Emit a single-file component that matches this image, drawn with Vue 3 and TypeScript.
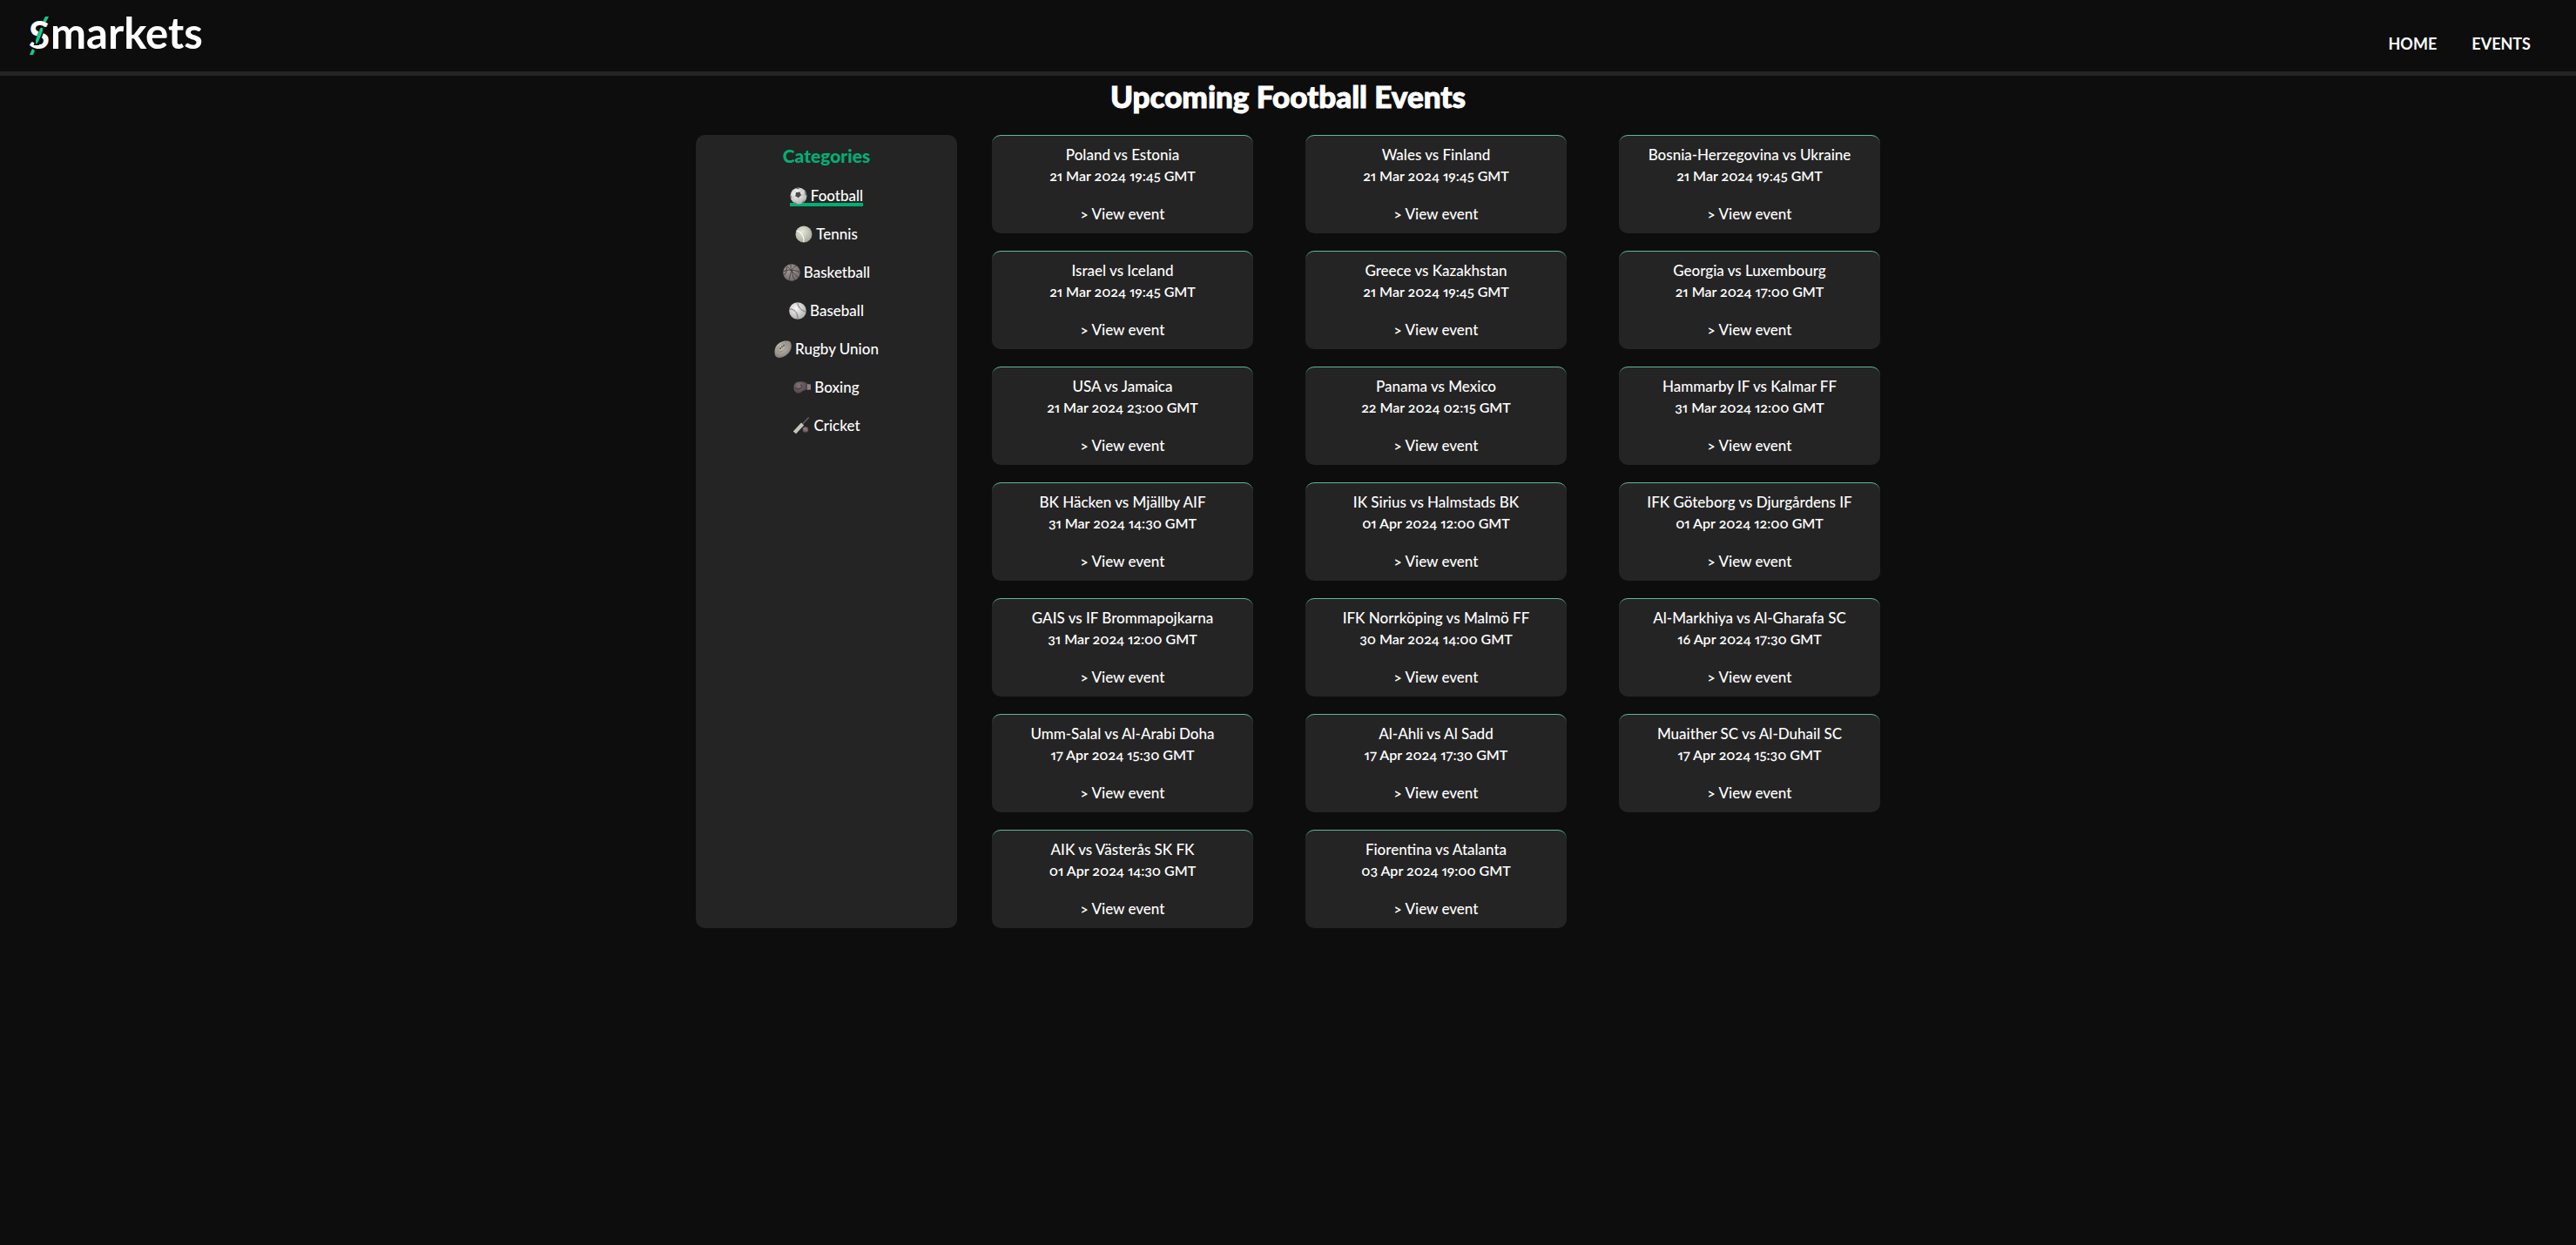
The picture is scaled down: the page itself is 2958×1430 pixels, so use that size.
<script setup lang="ts">
interface Category {
  name: string
  icon: string
  light: string
  dark: string
  active?: boolean
}

interface MatchEvent {
  name: string
  start: string
}

const categories: Category[] = [
  { name: 'Football', icon: 'football', light: '#ffffff', dark: '#a8a8a8', active: true },
  { name: 'Tennis', icon: 'tennis', light: '#e6e8da', dark: '#9da092' },
  { name: 'Basketball', icon: 'basketball', light: '#a89f9b', dark: '#6a6260' },
  { name: 'Baseball', icon: 'baseball', light: '#fafafa', dark: '#a6a6a6' },
  { name: 'Rugby Union', icon: 'rugby', light: '#cbc7bd', dark: '#7b776f' },
  { name: 'Boxing', icon: 'boxing', light: '#857476', dark: '#463c3e' },
  { name: 'Cricket', icon: 'cricket', light: '#8d7b7b', dark: '#574848' },
]

const events: MatchEvent[] = [
  { name: 'Poland vs Estonia', start: '21 Mar 2024 19:45 GMT' },
  { name: 'Wales vs Finland', start: '21 Mar 2024 19:45 GMT' },
  { name: 'Bosnia-Herzegovina vs Ukraine', start: '21 Mar 2024 19:45 GMT' },
  { name: 'Israel vs Iceland', start: '21 Mar 2024 19:45 GMT' },
  { name: 'Greece vs Kazakhstan', start: '21 Mar 2024 19:45 GMT' },
  { name: 'Georgia vs Luxembourg', start: '21 Mar 2024 17:00 GMT' },
  { name: 'USA vs Jamaica', start: '21 Mar 2024 23:00 GMT' },
  { name: 'Panama vs Mexico', start: '22 Mar 2024 02:15 GMT' },
  { name: 'Hammarby IF vs Kalmar FF', start: '31 Mar 2024 12:00 GMT' },
  { name: 'BK Häcken vs Mjällby AIF', start: '31 Mar 2024 14:30 GMT' },
  { name: 'IK Sirius vs Halmstads BK', start: '01 Apr 2024 12:00 GMT' },
  { name: 'IFK Göteborg vs Djurgårdens IF', start: '01 Apr 2024 12:00 GMT' },
  { name: 'GAIS vs IF Brommapojkarna', start: '31 Mar 2024 12:00 GMT' },
  { name: 'IFK Norrköping vs Malmö FF', start: '30 Mar 2024 14:00 GMT' },
  { name: 'Al-Markhiya vs Al-Gharafa SC', start: '16 Apr 2024 17:30 GMT' },
  { name: 'Umm-Salal vs Al-Arabi Doha', start: '17 Apr 2024 15:30 GMT' },
  { name: 'Al-Ahli vs Al Sadd', start: '17 Apr 2024 17:30 GMT' },
  { name: 'Muaither SC vs Al-Duhail SC', start: '17 Apr 2024 15:30 GMT' },
  { name: 'AIK vs Västerås SK FK', start: '01 Apr 2024 14:30 GMT' },
  { name: 'Fiorentina vs Atalanta', start: '03 Apr 2024 19:00 GMT' },
]
</script>

<template>
  <header class="topbar">
    <a href="#" class="brand" aria-label="Smarkets">
      <svg class="logo" width="220" height="70" viewBox="0 -10 220 70" aria-hidden="true">
        <text class="logo-s" x="3" y="46">S</text>
        <text class="logo-rest" x="28" y="46">markets</text>
        <path class="slash-gap" d="M17 22 L21 22 L14 41 L10 41 Z" />
        <g class="slash">
          <path d="M22 9 H26 L23 15 H19 Z" />
          <path d="M16 23 Q17 21 19 22 V26 L14 38 Q12 41 11 40 V36 Z" />
          <path d="M7 46 L10 48 L8 53 H4 Z" />
        </g>
      </svg>
    </a>
    <nav class="nav">
      <a href="#">HOME</a>
      <a href="#">EVENTS</a>
    </nav>
  </header>

  <main>
    <h1>Upcoming Football Events</h1>
    <div class="content">
      <aside class="sidebar">
        <h2>Categories</h2>
        <ul>
          <li v-for="c in categories" :key="c.name">
            <a href="#" class="category" :class="{ active: c.active }">
              <svg width="20" height="20" viewBox="0 0 20 20" aria-hidden="true">
                <defs>
                  <radialGradient :id="'shade-' + c.icon" cx="0.4" cy="0.35" r="0.75">
                    <stop offset="0" :stop-color="c.light" />
                    <stop offset="1" :stop-color="c.dark" />
                  </radialGradient>
                </defs>
                <g v-if="c.icon === 'football'">
                  <circle cx="10" cy="10" r="9.5" fill="url(#shade-football)" />
                  <path d="M7 6 L11.5 5.500 L13 9.300 L9.800 12.300 L6.200 10.300 Z" fill="#4a4a4a" />
                  <path d="M6.500 1.200 Q9 .2 12 .8 L9.500 2.200 Z M17.300 4.500 Q19.500 7 19.300 10.500 L17.300 8 Z M.6 8 L1.800 11 L1.400 13.500 Q0 11 .6 8 Z M4.800 16.400 L7.500 18.200 L8 19.300 Q5.800 18.600 4.800 16.400 Z M14.200 17 L16.800 14.600 Q16 17 13.200 18.900 Z" fill="#666" />
                  <path d="M7 6 L4.200 4.200 M11.500 5.500 L13.500 3 M13 9.300 L17 9 M9.800 12.300 L10.800 16.800 M6.200 10.300 L2.500 12" stroke="#b4b4b4" stroke-width=".6" fill="none" />
                </g>
                <g v-else-if="c.icon === 'tennis'">
                  <circle cx="10" cy="10" r="9.5" fill="url(#shade-tennis)" />
                  <path d="M1.500 5.800 Q7 7 9 12 Q10.500 15.500 9.800 19" fill="none" stroke="#fbfbf6" stroke-width="1.3" />
                </g>
                <g v-else-if="c.icon === 'basketball'">
                  <circle cx="10" cy="10" r="9.8" fill="url(#shade-basketball)" />
                  <path d="M1 8.500 Q9 5 19 9.500 M9 .5 Q10.500 9 7 19 M4.500 2.500 Q10 8 17.500 16 M15.500 2 Q10 4 10.500 10 Q11 16 14 19 M1 13 Q6 9 3.800 3.500" fill="none" stroke="#373232" stroke-width=".8" />
                </g>
                <g v-else-if="c.icon === 'baseball'">
                  <circle cx="10" cy="10" r="9.8" fill="url(#shade-baseball)" />
                  <path d="M.5 8 C6 7.500 10 12 10 19.500 M9.500 .5 C11 6 14 10 19.500 11" fill="none" stroke="#8b7f7f" stroke-width=".8" />
                  <path d="M.5 8 C6 7.500 10 12 10 19.500 M9.500 .5 C11 6 14 10 19.500 11" fill="none" stroke="#8b7f7f" stroke-width="2" stroke-dasharray=".6 1.4" />
                </g>
                <g v-else-if="c.icon === 'rugby'">
                  <path d="M.6 15 C0 10 2 5 6.500 2.500 C10 .4 14 0 17 .8 Q19 1.200 19.400 3.500 C20.300 7.500 19.500 11 16.500 14.500 C13 18.600 8.500 20.300 4.500 19.800 Q1 19.300 .6 15 Z" fill="url(#shade-rugby)" />
                  <path d="M4 11.500 C4 6.500 8 3 13.500 2.500 C15.500 6 13 11 7.500 13 C5.500 13.400 4.500 12.800 4 11.500 Z" fill="none" stroke="#7a766f" stroke-width=".6" />
                  <path d="M6 10 L12.500 4.500 M6.200 7.800 L8 10 M8 6 L9.800 8.400 M10 4.600 L11.800 7" fill="none" stroke="#47443f" stroke-width=".8" />
                </g>
                <g v-else-if="c.icon === 'boxing'">
                  <path d="M.5 9 Q1 4 6 3.500 Q12 2.300 16 5.500 V12.500 L11 14 Q8 17.500 4 16.500 Q0 14.500 .5 9 Z" fill="url(#shade-boxing)" />
                  <path d="M2 10 Q5 14 9.500 10 Q11 7 8 7" fill="none" stroke="#342d2f" stroke-width=".9" />
                  <path d="M16 6 L20 6.500 V12.500 L16 13 Z" fill="#868286" />
                </g>
                <g v-else>
                  <path d="M11.500 8 L18.700 .5" stroke="#6c6866" stroke-width="1.1" />
                  <path d="M.8 16.500 L10 6.500 L13.200 9.500 L4 19.200 Z" fill="#c9c5ba" />
                  <circle cx="15" cy="14.5" r="3.3" fill="url(#shade-cricket)" />
                  <path d="M12.800 13 Q15.500 13 17 16" fill="none" stroke="#9c8c8c" stroke-width=".6" />
                </g>
              </svg>
              <span>{{ c.name }}</span>
            </a>
          </li>
        </ul>
      </aside>

      <section class="events">
        <article v-for="e in events" :key="e.name" class="card">
          <p>{{ e.name }}</p>
          <p class="start">{{ e.start }}</p>
          <a href="#" class="view">&gt; View event</a>
        </article>
      </section>
    </div>
  </main>
</template>

<style>
body {
  margin: 0;
  background: #0d0d0d;
}
</style>

<style scoped>
.topbar,
main {
  font-family: Lato, "Open Sans", sans-serif;
  font-size: 17px;
  font-weight: 500;
  line-height: 24px;
  font-variant-numeric: oldstyle-nums proportional-nums;
  color: #fff;
}

a {
  color: inherit;
  text-decoration: none;
}

.topbar {
  display: flex;
  justify-content: space-between;
  align-items: flex-start;
  padding: 0 52px 12px 30px;
  border-bottom: 5px solid #242424;
}

.logo {
  display: block;
}

.logo text {
  font-family: Lato, sans-serif;
  font-weight: 700;
  fill: #fff;
}

.logo-s {
  font-size: 44px;
}

.logo-rest {
  font-size: 49px;
}

.slash-gap {
  fill: #0d0d0d;
  stroke: #0d0d0d;
  stroke-width: 2px;
}

.slash path {
  fill: #12cb91;
}

.nav {
  display: flex;
  gap: 40px;
  padding-top: 38px;
  font-size: 18px;
  font-weight: 700;
}

h1 {
  margin: 0 0 22px;
  text-align: center;
  font-size: 35px;
  font-weight: 900;
  line-height: 46px;
  -webkit-text-stroke: 1px currentColor;
}

.content {
  display: grid;
  grid-template-columns: minmax(0, 300fr) minmax(0, 1020fr);
  gap: 40px;
  max-width: 1360px;
  margin: 0 auto;
}

.sidebar {
  padding: 10px;
  border-radius: 10px;
  background: #242424;
  text-align: center;
}

h2 {
  margin: 0 0 20px;
  font-size: 21px;
  font-weight: 900;
  line-height: 28px;
  color: #00b074;
}

ul {
  display: flex;
  flex-direction: column;
  gap: 20px;
  margin: 0;
  padding: 0;
  list-style: none;
}

li {
  display: flex;
  justify-content: center;
}

.category {
  display: flex;
  align-items: center;
  gap: 4px;
  height: 24px;
}

.category.active {
  background: linear-gradient(#00b074, #00b074) 0 100% / 100% 4px no-repeat;
}

.events {
  display: grid;
  grid-template-columns: repeat(3, minmax(0, 1fr));
  gap: 20px 60px;
}

.card {
  display: flex;
  flex-direction: column;
  align-items: center;
  padding: 10px;
  border-top: 1px solid #5fb798;
  border-radius: 10px;
  background: #242424;
  text-align: center;
}

.card p {
  margin: 0;
}

.card .start {
  font-size: 16px;
  font-weight: 600;
}

.view {
  margin-top: 20px;
}

@media (max-width: 1000px) {
  .content {
    grid-template-columns: minmax(0, 1fr);
    padding: 0 20px;
  }

  .events {
    grid-template-columns: repeat(auto-fit, minmax(220px, 1fr));
    gap: 20px;
  }
}
</style>
